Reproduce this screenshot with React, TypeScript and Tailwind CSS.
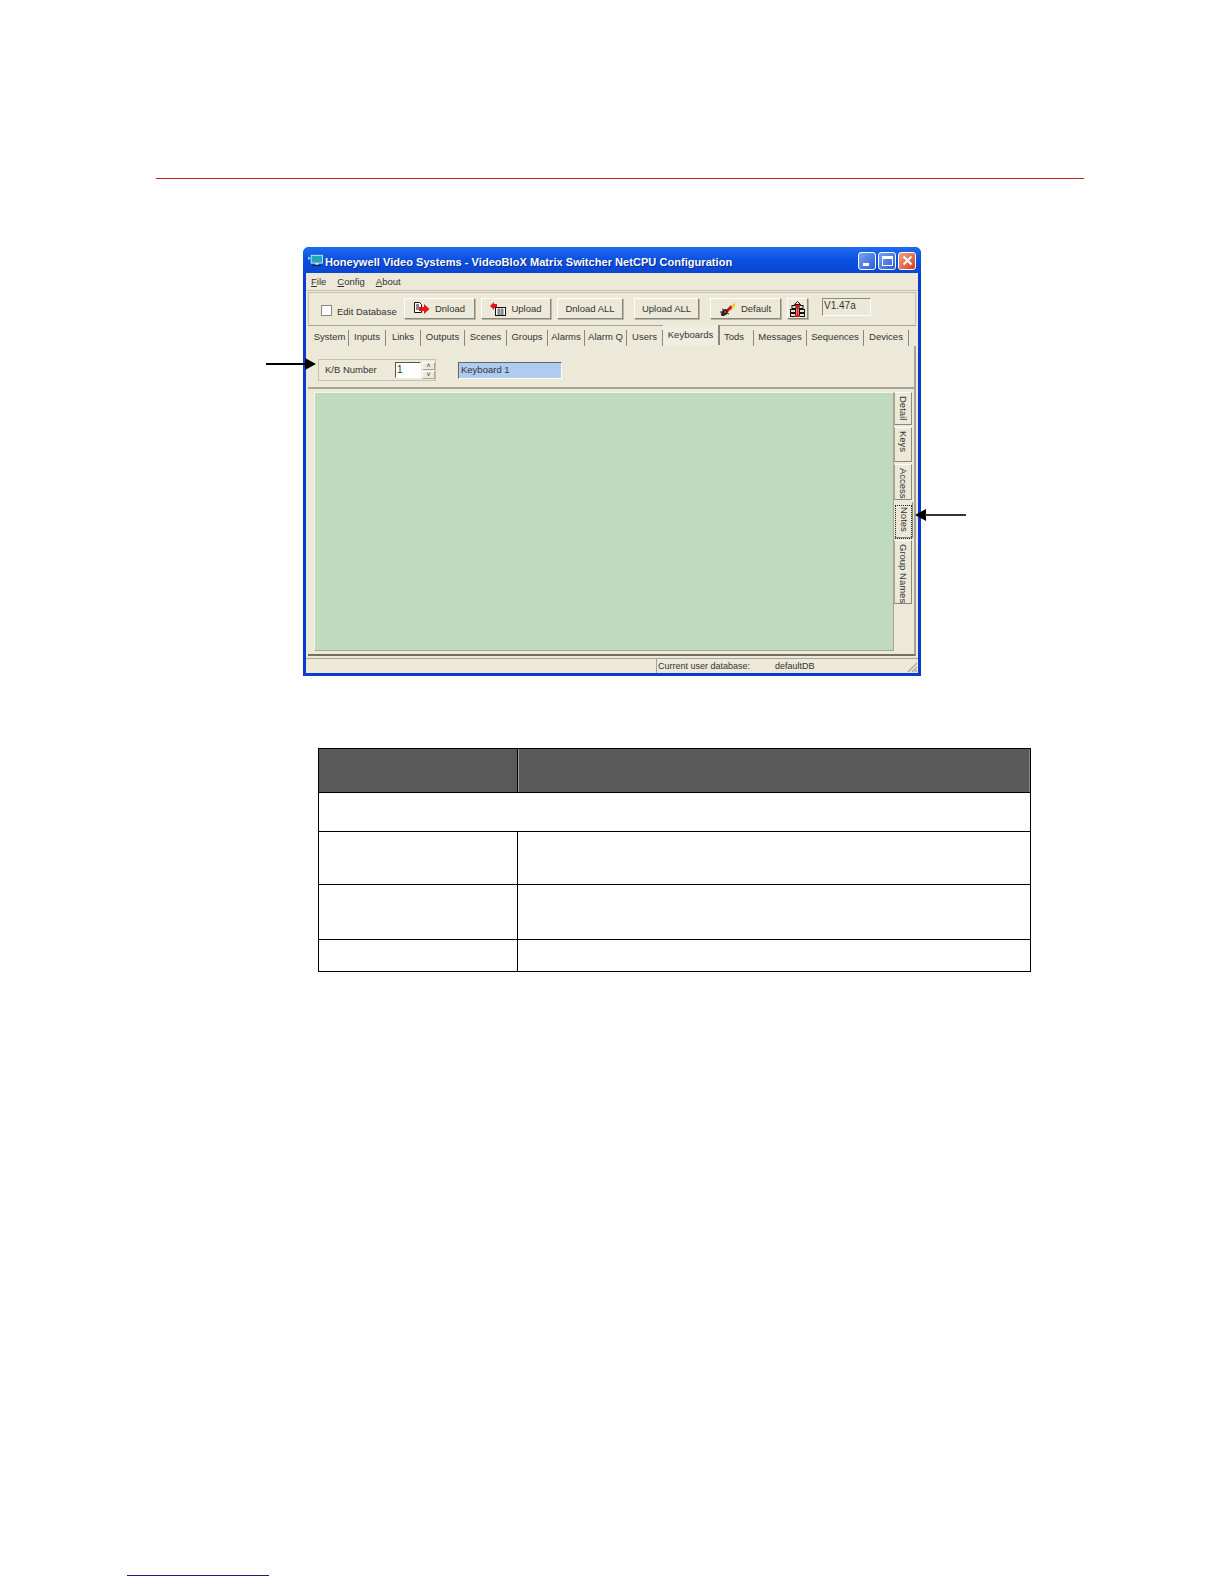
import React from 'react';

// ---------- datos ----------
const TABS = [
  { label: 'System', w: 'w-[38px]' },
  { label: 'Inputs', w: 'w-[37px]' },
  { label: 'Links', w: 'w-[35px]' },
  { label: 'Outputs', w: 'w-[44px]' },
  { label: 'Scenes', w: 'w-[42px]' },
  { label: 'Groups', w: 'w-[41px]' },
  { label: 'Alarms', w: 'w-[37px]' },
  { label: 'Alarm Q', w: 'w-[42px]' },
  { label: 'Users', w: 'w-[36px]' },
  { label: 'Keyboards', w: 'w-[57px]', active: true },
  { label: 'Tods', w: 'w-[34px] pr-[5px]' },
  { label: 'Messages', w: 'w-[53px]' },
  { label: 'Sequences', w: 'w-[57px]' },
  { label: 'Devices', w: 'w-[45px]' },
];

const SIDE_TABS = [
  { label: 'Detail', h: 'h-[33px]' },
  { label: 'Keys', h: 'h-[35px]' },
  { label: 'Access', h: 'h-[36px]' },
  { label: 'Notes', h: 'h-[36px]', active: true },
  { label: 'Group Names', h: 'h-[64px]' },
];

// ---------- iconos ----------
const MonitorIcon = () => (
  <svg width="15" height="13" viewBox="0 0 17 15">
    <path d="M0 3l3 2-3 2z" fill="#9fe8f0" />
    <rect x="3.5" y="1.5" width="13" height="9" fill="#1fa8b8" stroke="#d8ecff" />
    <rect x="8" y="10.5" width="4" height="2" fill="#d8e4f0" />
    <rect x="5" y="12.5" width="10" height="1.5" fill="#10204a" />
  </svg>
);

const DnloadIcon = () => (
  <svg width="16" height="14" viewBox="0 0 16 14">
    <path d="M0.5 0.5h5l2 2v8h-7z" fill="#fff" stroke="#111" />
    <path d="M2 3h3M2 5h3M2 7h3" stroke="#111" />
    <path d="M5 5h5V2l5.500 5-5.500 5V9H5z" fill="#e8141c" />
  </svg>
);

const UploadIcon = () => (
  <svg width="16" height="14" viewBox="0 0 16 14">
    <path d="M0 4l4-4v2h3v4H4v2z" fill="#e8141c" />
    <rect x="5.500" y="5.500" width="10" height="8" fill="#fff" stroke="#111" />
    <path d="M7 8h7M7 10h7M7 12h7M9 6v7M12 6v7" stroke="#333" strokeWidth="0.7" />
  </svg>
);

const DefaultIcon = () => (
  <svg width="16" height="16" viewBox="0 0 16 16">
    <path d="M15 1L9 8l2 2 4-5z" fill="#e8d020" />
    <path d="M11 4L6 9l2 2 4-4z" fill="#c8141c" />
    <path d="M1 14c0-3 2-6 5-6l2 2c0 3-3 5-6 5z" fill="#222" />
    <circle cx="5" cy="11" r="1.200" fill="#d83030" />
    <path d="M2 8l2 1M0 11l2 0M9 13l-2-1" stroke="#222" />
  </svg>
);

const NetIcon = () => (
  <svg width="15" height="16" viewBox="0 0 15 16">
    <path d="M7.500 0.500l3 3h-6z" fill="#e8e4d0" stroke="#111" />
    <rect x="2" y="4.500" width="4" height="3" fill="#e8e4d0" stroke="#111" />
    <rect x="9" y="4.500" width="4" height="3" fill="#e8e4d0" stroke="#111" />
    <rect x="0.500" y="8.500" width="5" height="3" fill="#e8e4d0" stroke="#111" />
    <rect x="9.500" y="8.500" width="5" height="3" fill="#e8e4d0" stroke="#111" />
    <rect x="0.500" y="12.500" width="5" height="3" fill="#e8e4d0" stroke="#111" />
    <rect x="9.500" y="12.500" width="5" height="3" fill="#e8e4d0" stroke="#111" />
    <path d="M5 5h5M5 15h5M7.500 5v10" stroke="#e0141c" strokeWidth="2" />
  </svg>
);

const ToolButton: React.FC<{ w: string; icon?: React.ReactNode; label?: string }> = ({ w, icon, label }) => (
  <div className={`${w} h-[21px] flex items-center justify-center gap-[5px] bg-[#ece9d8] border border-t-white border-l-white border-r-[#8a887c] border-b-[#8a887c] shadow-[1px_1px_0_#b8b5a4] text-[9.5px] text-[#333]`}>
    {icon}
    {label && <span className="pt-[1px]">{label}</span>}
  </div>
);

const Underlined: React.FC<{ first: string; rest: string }> = ({ first, rest }) => (
  <span>
    <span className="underline">{first}</span>
    {rest}
  </span>
);

const WindowFrame = () => (
  <div className="relative ml-[303px] mt-[68px] w-[618px] h-[429px] flex flex-col rounded-t-[6px] bg-[#0a3ad0] px-[3px] pb-[3px] font-['Liberation_Sans',Arial,sans-serif]">
    {/* Barra de título */}
    <div className="h-[26px] shrink-0 flex items-center rounded-t-[6px] -mx-[3px] pl-[5px] pr-[5px] bg-gradient-to-b from-[#1f6cf0] via-[#0a50e0] to-[#0b46d0]">
      <MonitorIcon />
      <span className="ml-[2px] mt-[4px] text-[11px] font-bold tracking-[0.05px] text-white [text-shadow:1px_1px_0_#0a2a90]">
        Honeywell Video Systems - VideoBloX Matrix Switcher NetCPU Configuration
      </span>
      <div className="ml-auto mt-[1px] flex gap-[2px]">
        <div className="w-[18px] h-[18px] rounded-[3px] border border-white bg-gradient-to-br from-[#7aa4f0] to-[#2a5ad8] flex items-end pl-[4px] pb-[3px]">
          <div className="w-[6px] h-[3px] bg-white" />
        </div>
        <div className="w-[18px] h-[18px] rounded-[3px] border border-white bg-gradient-to-br from-[#7aa4f0] to-[#2a5ad8] flex items-center justify-center">
          <div className="w-[11px] h-[10px] border border-t-[3px] border-white" />
        </div>
        <div className="w-[18px] h-[18px] rounded-[3px] border border-white bg-gradient-to-br from-[#f0a080] to-[#d83818] flex items-center justify-center">
          <svg width="11" height="11" viewBox="0 0 11 11">
            <path d="M1.500 1.500l8 8M9.500 1.500l-8 8" stroke="#fff" strokeWidth="2" />
          </svg>
        </div>
      </div>
    </div>

    <div className="flex-1 flex flex-col min-h-0 bg-[#ece9d8] text-[9.5px] text-[#333]">
      {/* Menú */}
      <div className="h-[18px] shrink-0 flex items-center gap-[11px] pl-[5px] pt-[1px] border-b border-[#c4c1b0]">
        <Underlined first="F" rest="ile" />
        <Underlined first="C" rest="onfig" />
        <Underlined first="A" rest="bout" />
      </div>

      {/* Barra de herramientas */}
      <div className="h-[34px] shrink-0 mx-[2px] mt-[1px] flex items-start pt-[5px] border border-[#c4c1b0] border-b-[#a8a594]">
        <div className="w-[11px] h-[11px] ml-[12px] mt-[7px] bg-white border border-[#8a887c]" />
        <span className="ml-[5px] mt-[7px] w-[61px] whitespace-nowrap">Edit Database</span>
        <div className="ml-[6px] flex gap-[6px]">
          <ToolButton w="w-[71px]" icon={<DnloadIcon />} label="Dnload" />
          <ToolButton w="w-[70px]" icon={<UploadIcon />} label="Upload" />
          <ToolButton w="w-[66px]" label="Dnload ALL" />
        </div>
        <div className="ml-[11px]">
          <ToolButton w="w-[65px]" label="Upload ALL" />
        </div>
        <div className="ml-[11px]">
          <ToolButton w="w-[71px]" icon={<DefaultIcon />} label="Default" />
        </div>
        <div className="ml-[6px]">
          <ToolButton w="w-[21px]" icon={<NetIcon />} />
        </div>
        <div className="ml-[14px] w-[49px] h-[18px] pl-[1px] leading-[14px] text-[10px] bg-[#ece9d8] border border-[#8a887c] border-r-white border-b-white">
          V1.47a
        </div>
      </div>

      {/* Pestañas */}
      <div className="h-[20px] shrink-0 flex items-center pl-[5px]">
        {TABS.map((tab) => (
          <div
            key={tab.label}
            className={
              tab.active
                ? `${tab.w} h-[20px] -mt-[2px] flex items-center justify-center border-r-2 border-[#8a887c] bg-[#f0eee0]`
                : `${tab.w} h-[16px] mt-[3px] flex items-center justify-center border-r border-[#8a887c]`
            }
          >
            {tab.label}
          </div>
        ))}
      </div>

      {/* Panel */}
      <div className="flex-1 min-h-0 mr-[2px] ml-[2px] flex flex-col border-r-2 border-[#a8a594] border-b-2 border-b-[#716f64]">
        <div className="h-[43px] shrink-0 flex items-center pl-[10px] pt-[7px] border-b-2 border-[#a8a594]">
          <div className="w-[118px] h-[22px] flex items-center pl-[6px] border border-[#c4c1b0]">
            <span className="w-[70px]">K/B Number</span>
            <div className="w-[26px] h-[16px] pl-[1px] leading-[14px] text-[10px] bg-white border border-l-[#555] border-t-[#555] border-r-white border-b-white">
              1
            </div>
            <div className="ml-[1px] w-[13px] h-[17px] flex flex-col gap-px">
              <div className="flex-1 bg-[#ece9d8] border border-[#a8a594] border-t-white border-l-white leading-[6px] text-center text-[7px]">˄</div>
              <div className="flex-1 bg-[#ece9d8] border border-[#a8a594] border-t-white border-l-white leading-[6px] text-center text-[7px]">˅</div>
            </div>
          </div>
          <div className="ml-[22px] w-[104px] h-[17px] pl-[2px] flex items-center bg-[#aeccf0] border border-l-[#666] border-t-[#666] border-r-white border-b-white">
            Keyboard 1
          </div>
        </div>
        <div className="flex-1 min-h-0 flex pt-[3px] pl-[6px] pb-[3px]">
          <div className="flex-1 bg-[#bfdabf] border border-[#f4f4ea] border-r-[#a8a594] border-b-[#a8a594]" />
          <div className="w-[20px] flex flex-col gap-[2px]">
            {SIDE_TABS.map((tab) => (
              <div
                key={tab.label}
                className={
                  tab.active
                    ? `${tab.h} w-[19px] flex justify-center pt-[3px] bg-[#ece9d8] border border-[#e8e6d8] border-r-[#8a887c] border-b-[#8a887c]`
                    : `${tab.h} w-[18px] flex justify-center pt-[3px] bg-[#ece9d8] border border-t-white border-r-[#8a887c] border-b-[#8a887c] border-l-[#a8a594]`
                }
              >
                <span
                  className={
                    tab.active
                      ? '[writing-mode:vertical-rl] whitespace-nowrap outline-1 outline-dotted outline-[#222] self-stretch -mb-[1px] px-[1px]'
                      : '[writing-mode:vertical-rl] whitespace-nowrap'
                  }
                >
                  {tab.label}
                </span>
              </div>
            ))}
          </div>
        </div>
      </div>

      {/* Barra de estado */}
      <div className="h-[15px] mt-[2px] shrink-0 flex items-center border-t border-[#a8a594] text-[9px]">
        <div className="ml-[350px] h-full flex items-center pl-[1px] pt-[1px] border-l border-[#a8a594]">
          <span className="w-[117px]">Current user database:</span>
          <span>defaultDB</span>
        </div>
        <svg className="ml-auto self-end" width="11" height="11" viewBox="0 0 11 11">
          <path d="M10 1L1 10M10 5L5 10M10 8L8 10" stroke="#a8a594" strokeWidth="1.200" />
        </svg>
      </div>
    </div>

    {/* Flechas */}
    <div className="absolute left-[-37px] top-[116px] w-[39px] h-[2px] bg-black" />
    <div className="absolute left-[2px] top-[111px] w-0 h-0 border-y-[6px] border-y-transparent border-l-[11px] border-l-black" />
    <div className="absolute left-[612px] top-[262px] w-0 h-0 border-y-[6px] border-y-transparent border-r-[11px] border-r-black" />
    <div className="absolute left-[622px] top-[267px] w-[41px] h-[2px] bg-[#333]" />
  </div>
);

const DataTable = () => (
  <table className="ml-[318px] mt-[72px] w-[713px] table-fixed border-collapse border border-black">
    <colgroup>
      <col className="w-[199px]" />
      <col />
    </colgroup>
    <tbody>
      <tr className="h-[44px] bg-[#595959]">
        <td className="border border-black" />
        <td className="border border-black shadow-[inset_1px_0_0_#999,inset_-1px_0_0_#888]" />
      </tr>
      <tr className="h-[39px]">
        <td colSpan={2} className="border border-black" />
      </tr>
      <tr className="h-[53px]">
        <td className="border border-black" />
        <td className="border border-black" />
      </tr>
      <tr className="h-[55px]">
        <td className="border border-black" />
        <td className="border border-black" />
      </tr>
      <tr className="h-[32px]">
        <td className="border border-black" />
        <td className="border border-black" />
      </tr>
    </tbody>
  </table>
);

const App: React.FC = () => {
  return (
    <div className="w-[1224px] h-[1584px] bg-white flex flex-col overflow-hidden">
      <div className="mt-[178px] ml-[156px] w-[928px] h-px shrink-0 bg-[#c02020]" />
      <WindowFrame />
      <DataTable />
      <div className="mt-[603px] ml-[127px] w-[142px] h-px shrink-0 bg-[#1a1a8c]" />
    </div>
  );
};

export default App;
